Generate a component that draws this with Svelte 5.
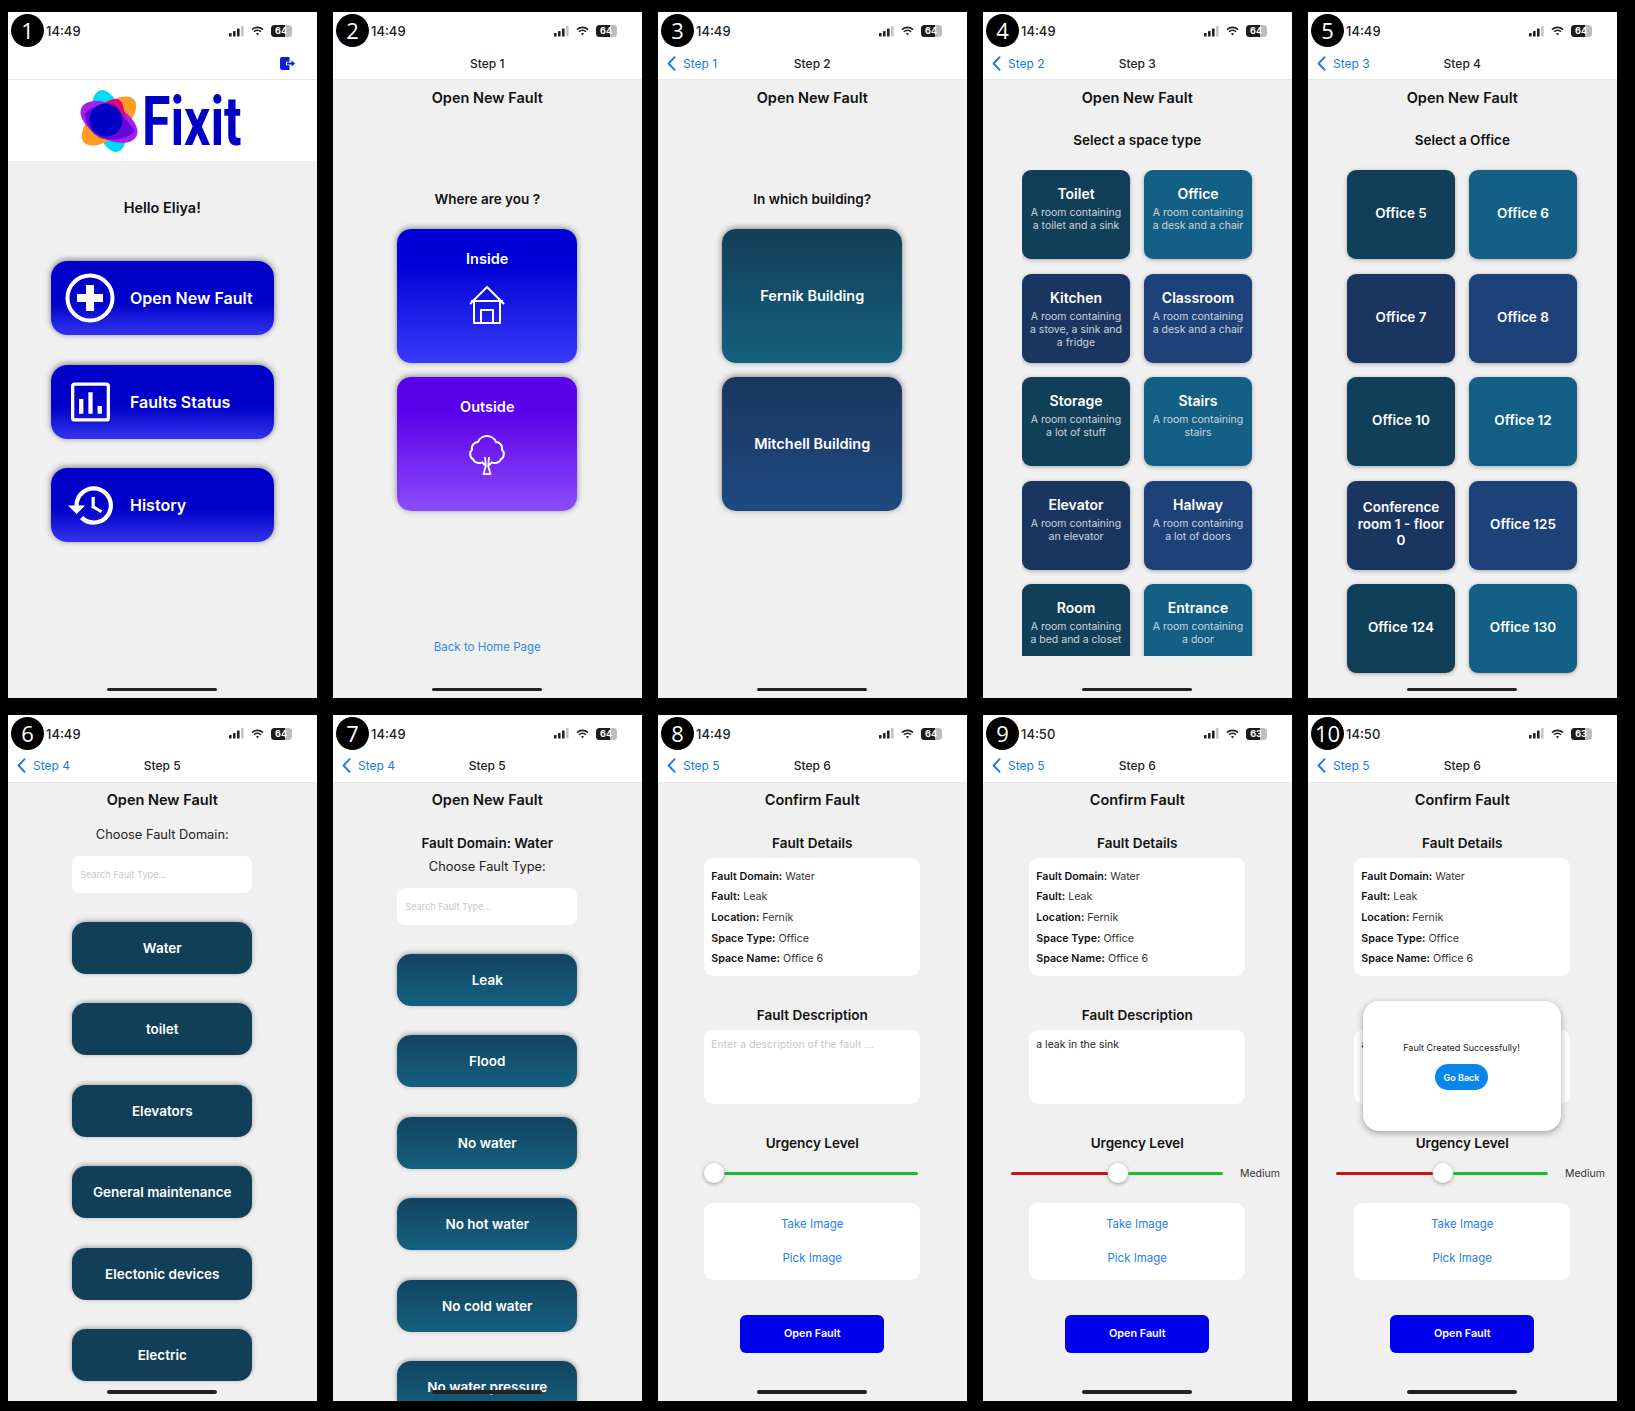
<script>
    const spaceRows = [
        { name: "Toilet", desc: "A room containing a toilet and a sink" },
        { name: "Office", desc: "A room containing a desk and a chair" },
        { name: "Kitchen", desc: "A room containing a stove, a sink and a fridge" },
        { name: "Classroom", desc: "A room containing a desk and a chair" },
        { name: "Storage", desc: "A room containing a lot of stuff" },
        { name: "Stairs", desc: "A room containing stairs" },
        { name: "Elevator", desc: "A room containing an elevator" },
        { name: "Halway", desc: "A room containing a lot of doors" },
        { name: "Room", desc: "A room containing a bed and a closet" },
        { name: "Entrance", desc: "A room containing a door" }
    ];
    const offices = ["Office 5", "Office 6", "Office 7", "Office 8", "Office 10", "Office 12", "Conference room 1 - floor 0", "Office 125", "Office 124", "Office 130"];
    const domains = ["Water", "toilet", "Elevators", "General maintenance", "Electonic devices", "Electric"];
    const faultTypes = ["Leak", "Flood", "No water", "No hot water", "No cold water", "No water pressure"];
    const details = [["Fault Domain:", "Water"], ["Fault:", "Leak"], ["Location:", "Fernik"], ["Space Type:", "Office"], ["Space Name:", "Office 6"]];

    // colours repeat every 4 cards, like the app does
    const tones = ["teal", "sea", "navy", "blue"];
</script>

{#snippet top(n, time, batt, back, step)}
    <div class="top">
        <div class="status">
            <span class="time">{time}</span>
            <span class="status-icons">
                <svg width="15" height="11" viewBox="0 0 15 11"><rect x="0" y="7" width="2.6" height="3.5" rx=".6" fill="#222"/><rect x="4" y="5" width="2.6" height="5.5" rx=".6" fill="#222"/><rect x="8" y="2.5" width="2.6" height="8" rx=".6" fill="#222"/><rect x="12" y="0" width="2.6" height="10.5" rx=".6" fill="#c4c4c4"/></svg>
                <svg class="wifi" width="13" height="10" viewBox="0 0 13 10"><path d="M1 3.6a8 8 0 0 1 11 0M3 5.8a5 5 0 0 1 7 0" fill="none" stroke="#222" stroke-width="1.6"/><path d="M4.9 7.6a2.4 2.4 0 0 1 3.2 0L6.5 9.6z" fill="#222"/></svg>
                <span class="batt">{batt}</span>
            </span>
        </div>
        <div class="nav">
            {#if back}
                <span class="back">
                    <svg width="9" height="15" viewBox="0 0 9 15"><path d="M7.6 1.2 1.6 7.5l6 6.3" fill="none" stroke="#1a7be6" stroke-width="1.9" stroke-linecap="round" stroke-linejoin="round"/></svg>
                    {back}
                </span>
            {:else}
                <span></span>
            {/if}
            <span class="step">{step}</span>
            <span></span>
        </div>
    </div>
    <div class="badge">{n}</div>
{/snippet}

{#snippet confirm(text, thumbLeft)}
    <h2 class="title">Confirm Fault</h2>
    <h3 class="sub first">Fault Details</h3>
    <div class="panel details">
        {#each details as d}
            <p><b>{d[0]}</b> {d[1]}</p>
        {/each}
    </div>
    <h3 class="sub desc-head">Fault Description</h3>
    <div class="panel description" class:empty={!text}>{text || "Enter a description of the fault ..."}</div>
    <h3 class="sub urgency">Urgency Level</h3>
    <div class="slider" class:start={thumbLeft}>
        {#if !thumbLeft}<i class="track red"></i>{/if}
        <i class="thumb"></i>
        <i class="track green"></i>
        {#if !thumbLeft}<span class="level">Medium</span>{/if}
    </div>
    <div class="panel images">
        <span>Take Image</span>
        <span>Pick Image</span>
    </div>
    <button class="open-fault">Open Fault</button>
{/snippet}

<div class="board">
    <!-- 1 home -->
    <section class="phone">
        {@render top(1, "14:49", 64, "", "")}
        <svg class="logout" width="15" height="13" viewBox="0 0 15 13"><path d="M2 0h7.5v4.8H6v3.4h3.5V13H2a2 2 0 0 1-2-2V2a2 2 0 0 1 2-2z" fill="#0a1fe0"/><path d="M7 5.6h4.6V3.4L15 6.5l-3.4 3.1V7.4H7z" fill="#0a1fe0"/></svg>
        <div class="logo-band">
            <svg class="blobs" width="58" height="64" viewBox="0 0 58 64">
                <ellipse cx="29" cy="32" rx="15" ry="32" transform="rotate(-17 29 32)" fill="#00d8f6"/>
                <ellipse cx="29" cy="32" rx="16" ry="33" transform="rotate(50 29 32)" fill="#ff9a22"/>
                <ellipse cx="29" cy="33" rx="17" ry="31" transform="rotate(-62 29 33)" fill="#a41fe8"/>
                <path d="M24 15c5-5 17-9 19 2 2 7 3 12 3 17-6-10-14-16-22-19z" fill="#e6007e"/>
                <path d="M5 25c7-9 22-13 31-5 8 8 16 17 19 22-6 7-20 10-31 8C14 48 6 38 5 25z" fill="#5200d8" opacity=".75"/>
                <circle cx="26" cy="31" r="16.5" fill="#0000c4"/>
            </svg>
            <span class="fixit">Fixit</span>
        </div>
        <p class="hello">Hello Eliya!</p>
        <div class="menu">
            <div class="menu-btn">
                <span class="menu-icon">
                    <svg width="50" height="50" viewBox="0 0 50 50"><circle cx="25" cy="25" r="22.5" fill="none" stroke="#fff" stroke-width="4"/><path d="M25 12v26M12 25h26" stroke="#fff" stroke-width="8"/></svg>
                </span>
                Open New Fault
            </div>
            <div class="menu-btn">
                <span class="menu-icon">
                    <svg width="39" height="40" viewBox="0 0 40 40"><rect x="1.7" y="1.7" width="36.6" height="36.6" rx="2" fill="none" stroke="#fff" stroke-width="3.4"/><path d="M10.500 17v15M20 10v22M29.500 24v8" stroke="#fff" stroke-width="4.400"/></svg>
                </span>
                Faults Status
            </div>
            <div class="menu-btn">
                <span class="menu-icon">
                    <svg width="45" height="39" viewBox="1 3 21 18"><path fill="#fff" d="M13 3a9 9 0 0 0-9 9H1l3.89 3.89.07.14L9 12H6c0-3.87 3.13-7 7-7s7 3.13 7 7-3.13 7-7 7c-1.93 0-3.68-.79-4.94-2.06l-1.42 1.42A8.954 8.954 0 0 0 13 21a9 9 0 0 0 0-18zm-1 5v5l4.28 2.54.72-1.21-3.5-2.08V8H12z"/></svg>
                </span>
                History
            </div>
        </div>
        <i class="home"></i>
    </section>

    <!-- 2 inside / outside -->
    <section class="phone">
        {@render top(2, "14:49", 64, "", "Step 1")}
        <h2 class="title">Open New Fault</h2>
        <h3 class="sub question">Where are you ?</h3>
        <div class="big-cards">
            <div class="big inside">
                <span>Inside</span>
                <svg width="38" height="40" viewBox="0 0 38 40"><path d="M2 19 19 2l17 17M6 15.500V38h26V15.500M3 16h32M13 38V25h12v13" fill="none" stroke="#fff" stroke-width="2" stroke-linejoin="round"/></svg>
            </div>
            <div class="big outside">
                <span>Outside</span>
                <svg width="38" height="40" viewBox="0 0 38 40"><path d="M15 27c-3 2-9 1-10-3-3-1-4-7-1-9-1-5 3-8 6-8 1-4 6-6 9-6s8 2 9 6c3 0 7 3 6 8 3 2 2 8-1 9-1 4-7 5-10 3" fill="none" stroke="#fff" stroke-width="2" stroke-linejoin="round"/><path d="M17 22l.800 9-2.300 8h7l-2.300-8 .800-9M17.800 31l-4-4M20.200 31l4-4" fill="none" stroke="#fff" stroke-width="1.800" stroke-linejoin="round"/></svg>
            </div>
        </div>
        <span class="home-link">Back to Home Page</span>
        <i class="home"></i>
    </section>

    <!-- 3 building -->
    <section class="phone">
        {@render top(3, "14:49", 64, "Step 1", "Step 2")}
        <h2 class="title">Open New Fault</h2>
        <h3 class="sub question">In which building?</h3>
        <div class="big-cards">
            <div class="big fernik"><span>Fernik Building</span></div>
            <div class="big mitchell"><span>Mitchell Building</span></div>
        </div>
        <i class="home"></i>
    </section>

    <!-- 4 space type -->
    <section class="phone">
        {@render top(4, "14:49", 64, "Step 2", "Step 3")}
        <h2 class="title">Open New Fault</h2>
        <h3 class="sub first">Select a space type</h3>
        <div class="spaces clipped">
            {#each spaceRows as s, i}
                <div class="space {tones[i % 4]}">
                    <strong>{s.name}</strong>
                    <small>{s.desc}</small>
                </div>
            {/each}
        </div>
        <i class="home"></i>
    </section>

    <!-- 5 office -->
    <section class="phone">
        {@render top(5, "14:49", 64, "Step 3", "Step 4")}
        <h2 class="title">Open New Fault</h2>
        <h3 class="sub first">Select a Office</h3>
        <div class="spaces">
            {#each offices as o, i}
                <div class="space only {tones[i % 4]}"><strong>{o}</strong></div>
            {/each}
        </div>
        <i class="home"></i>
    </section>

    <!-- 6 domain -->
    <section class="phone">
        {@render top(6, "14:49", 64, "Step 4", "Step 5")}
        <h2 class="title">Open New Fault</h2>
        <p class="choose domain">Choose Fault Domain:</p>
        <div class="search">Search Fault Type...</div>
        <div class="pick-list">
            {#each domains as d}
                <div class="pick flat">{d}</div>
            {/each}
        </div>
        <i class="home"></i>
    </section>

    <!-- 7 fault type -->
    <section class="phone">
        {@render top(7, "14:49", 64, "Step 4", "Step 5")}
        <h2 class="title">Open New Fault</h2>
        <h3 class="sub first">Fault Domain: Water</h3>
        <p class="choose">Choose Fault Type:</p>
        <div class="search">Search Fault Type...</div>
        <div class="pick-list">
            {#each faultTypes as f}
                <div class="pick">{f}</div>
            {/each}
        </div>
        <i class="home"></i>
    </section>

    <!-- 8 - 10 confirm -->
    <section class="phone">
        {@render top(8, "14:49", 64, "Step 5", "Step 6")}
        {@render confirm("", true)}
        <i class="home"></i>
    </section>
    <section class="phone">
        {@render top(9, "14:50", 63, "Step 5", "Step 6")}
        {@render confirm("a leak in the sink", false)}
        <i class="home"></i>
    </section>
    <section class="phone">
        {@render top(10, "14:50", 63, "Step 5", "Step 6")}
        {@render confirm("a leak in the sink", false)}
        <div class="modal">
            <p>Fault Created Successfully!</p>
            <button class="go-back">Go Back</button>
        </div>
        <i class="home"></i>
    </section>
</div>

<style>
    :global(body) {
        background: #000;
    }
    .board {
        display: grid;
        grid-template-columns: repeat(5, 308.5px);
        grid-auto-rows: 686px;
        gap: 16.5px;
        padding: 12px 0 0 8px;
        font-family: Inter, "Liberation Sans", sans-serif;
        color: #111;
        height: 1411px;
        box-sizing: border-box;
    }
    .phone {
        position: relative;
        display: flex;
        flex-direction: column;
        background: #f0f0f0;
        overflow: hidden;
    }
    h2, h3, p {
        margin: 0;
    }

    .top {
        flex: none;
        height: 68px;
        box-sizing: border-box;
        background: #fff;
        border-bottom: 1px solid #e8e8e8;
    }
    .status {
        display: flex;
        justify-content: space-between;
        align-items: center;
        height: 38px;
        padding: 0 25px 0 38px;
    }
    .time {
        font-size: 13px;
        font-weight: 500;
        color: #222;
    }
    .status-icons {
        display: flex;
        align-items: center;
        gap: 7px;
    }
    .batt {
        width: 21px;
        height: 12px;
        border-radius: 3.5px;
        background: linear-gradient(90deg, #1c1c1c 68%, #bdbdbd 68%);
        color: #fff;
        font-size: 9px;
        font-weight: 700;
        line-height: 12px;
        text-align: center;
    }
    .nav {
        display: grid;
        grid-template-columns: 1fr auto 1fr;
        align-items: center;
        height: 26px;
        font-size: 12px;
    }
    .back {
        display: flex;
        align-items: center;
        gap: 7px;
        padding-left: 9px;
        color: #1a7be6;
    }
    .step {
        font-weight: 500;
        color: #222;
    }
    .badge {
        position: absolute;
        left: 3px;
        top: 2px;
        width: 33px;
        height: 33px;
        border-radius: 50%;
        background: #000;
        color: #fff;
        font-family: "Open Sans", sans-serif;
        font-size: 22px;
        font-weight: 500;
        line-height: 33px;
        text-align: center;
    }
    .home {
        position: absolute;
        left: 99px;
        bottom: 7px;
        width: 110px;
        height: 3.5px;
        border-radius: 2px;
        background: #222;
    }
    .logout {
        position: absolute;
        left: 272px;
        top: 45px;
    }

    /* home screen */
    .logo-band {
        flex: none;
        display: flex;
        align-items: center;
        height: 81px;
        padding-left: 72px;
        box-sizing: border-box;
        background: #fff;
    }
    .fixit {
        margin: 2px 0 0 4px;
        font-family: Roboto, sans-serif;
        font-size: 69px;
        font-weight: 700;
        line-height: 68px;
        color: #0000c4;
        transform: scaleX(.75);
        transform-origin: left center;
    }
    .hello {
        margin-top: 37.5px;
        font-size: 14.500px;
        font-weight: 600;
        line-height: 18px;
        text-align: center;
    }
    .menu {
        display: flex;
        flex-direction: column;
        gap: 29.5px;
        margin: 44.5px 0 0 43px;
        width: 223px;
    }
    .menu-btn {
        display: flex;
        align-items: center;
        gap: 15px;
        height: 74px;
        padding-left: 14px;
        border-radius: 16px;
        background: linear-gradient(#0000c8 55%, #3333ee);
        box-shadow: 0 -1px 6px rgba(0, 0, 0, .5);
        color: #fff;
        font-size: 16px;
        font-weight: 600;
    }
    .menu-icon {
        display: flex;
        justify-content: center;
        align-items: center;
        width: 50px;
    }

    /* headings */
    .title {
        margin-top: 8.5px;
        font-size: 14.500px;
        font-weight: 600;
        line-height: 18px;
        text-align: center;
    }
    .sub {
        font-size: 13.500px;
        font-weight: 600;
        line-height: 18px;
        text-align: center;
    }
    .first {
        margin-top: 24.5px;
    }
    .question {
        margin-top: 83.5px;
    }

    /* big cards on step 1, 2 */
    .big-cards {
        display: flex;
        flex-direction: column;
        gap: 14.5px;
        width: 180px;
        margin: 21px auto 0;
    }
    .big {
        display: flex;
        flex-direction: column;
        align-items: center;
        justify-content: center;
        height: 133.5px;
        border-radius: 14px;
        box-shadow: 0 -1px 6px rgba(0, 0, 0, .45);
        color: #fff;
        font-size: 14.500px;
        font-weight: 600;
    }
    .big svg {
        margin-top: 18px;
    }
    .inside {
        justify-content: flex-start;
        padding-top: 21px;
        box-sizing: border-box;
        background: linear-gradient(#0000d6 25%, #3a3afa);
    }
    .outside {
        justify-content: flex-start;
        padding-top: 21px;
        box-sizing: border-box;
        background: linear-gradient(#5a00ea 25%, #8c4cfa);
    }
    .outside svg {
        margin-top: 20px;
    }
    .fernik {
        background: linear-gradient(#123f58, #15607f);
    }
    .mitchell {
        background: linear-gradient(#1a3560, #1f4a80);
    }
    .home-link {
        margin-top: 128.5px;
        font-size: 11.500px;
        line-height: 16px;
        text-align: center;
        color: #2f8be6;
    }

    /* space grid */
    .spaces {
        display: grid;
        grid-template-columns: 108px 108px;
        grid-auto-rows: 89px;
        gap: 14.5px 14px;
        margin: 21px 0 0 39px;
    }
    .clipped {
        height: 486px;
        overflow: hidden;
    }
    .space {
        display: flex;
        flex-direction: column;
        align-items: center;
        padding: 15px 7px 0;
        box-sizing: border-box;
        border-radius: 9px;
        box-shadow: 0 1px 4px rgba(0, 0, 0, .3);
        color: #fff;
        text-align: center;
    }
    .space strong {
        font-size: 14px;
        font-weight: 600;
        line-height: 18px;
    }
    .space small {
        margin-top: 3px;
        font-size: 10.500px;
        line-height: 13.300px;
        color: #cdd6de;
    }
    .only {
        justify-content: center;
        padding: 0 7px 2px;
    }
    .only strong {
        font-size: 13.500px;
        line-height: 16.500px;
    }
    .teal { background: #113f58; }
    .sea { background: #145f85; }
    .navy { background: #1a3560; }
    .blue { background: #1d4279; }

    /* fault pickers */
    .choose {
        margin-top: 6.5px;
        font-size: 12.800px;
        line-height: 18px;
        text-align: center;
        color: #222;
    }
    .domain {
        margin-top: 17px;
    }
    .search {
        flex: none;
        width: 180px;
        height: 37px;
        margin: 11.500px auto 0;
        padding-left: 8px;
        box-sizing: border-box;
        border-radius: 8px;
        background: #fff;
        color: #c9c9c9;
        font-size: 9.200px;
        line-height: 37px;
    }
    .pick-list {
        display: flex;
        flex-direction: column;
        gap: 29.4px;
        width: 180px;
        margin: 29.500px auto 0;
    }
    .pick {
        flex: none;
        height: 52px;
        border-radius: 14px;
        background: linear-gradient(#124460, #156080);
        box-shadow: 0 -1px 5px rgba(0, 0, 0, .35);
        color: #fff;
        font-size: 13.500px;
        font-weight: 600;
        line-height: 52px;
        text-align: center;
    }
    .flat {
        background: #113f58;
    }

    /* confirm screen */
    .panel {
        flex: none;
        width: 216px;
        margin: 6.5px auto 0;
        box-sizing: border-box;
        border-radius: 9px;
        background: #fff;
    }
    .details {
        height: 118px;
        padding: 8.500px 7px;
        font-size: 10.700px;
        line-height: 20.700px;
        color: #333;
    }
    .details b {
        font-weight: 600;
        color: #111;
    }
    .desc-head {
        margin-top: 29.5px;
    }
    .description {
        height: 73.5px;
        padding: 7px 7px;
        font-size: 10.500px;
        line-height: 15px;
        color: #222;
    }
    .empty {
        color: #c6c6c6;
    }
    .urgency {
        margin-top: 30.5px;
    }
    .slider {
        flex: none;
        display: flex;
        align-items: center;
        height: 20px;
        margin-top: 11px;
        padding-left: 28px;
    }
    .start {
        padding-left: 46px;
    }
    .track {
        height: 3px;
        border-radius: 2px;
    }
    .red {
        width: 97px;
        background: #c4141e;
    }
    .green {
        width: 95px;
        background: #22b83a;
    }
    .start .green {
        width: 194px;
    }
    .thumb {
        flex: none;
        width: 20px;
        height: 20px;
        border-radius: 50%;
        background: #fff;
        box-shadow: 0 1px 4px rgba(0, 0, 0, .35);
    }
    .level {
        margin-left: 17px;
        font-size: 10.500px;
        color: #333;
    }
    .images {
        display: flex;
        flex-direction: column;
        align-items: center;
        gap: 18px;
        height: 77px;
        margin-top: 19.5px;
        padding-top: 13px;
        color: #2a80e8;
        font-size: 11.500px;
        line-height: 16px;
    }
    .open-fault {
        flex: none;
        width: 144px;
        height: 38px;
        margin: 35px auto 0;
        border: 0;
        border-radius: 6px;
        background: #0000ee;
        color: #fff;
        font-family: inherit;
        font-size: 10.800px;
        font-weight: 600;
    }
    .modal {
        position: absolute;
        left: 54.5px;
        top: 286px;
        width: 198px;
        height: 130px;
        display: flex;
        flex-direction: column;
        align-items: center;
        padding-top: 41px;
        box-sizing: border-box;
        border-radius: 16px;
        background: #fff;
        box-shadow: 0 2px 7px rgba(0, 0, 0, .35);
        font-size: 9px;
        color: #222;
    }
    .go-back {
        width: 53px;
        height: 26px;
        margin-top: 11.500px;
        border: 0;
        border-radius: 13px;
        background: #0a86ea;
        color: #fff;
        font-family: inherit;
        font-size: 9px;
        font-weight: 600;
    }
</style>
